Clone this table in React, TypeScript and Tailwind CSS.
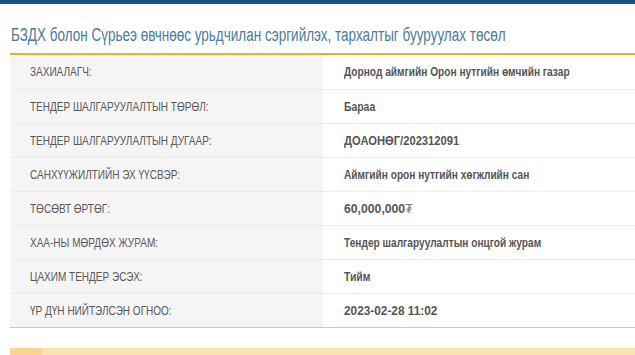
import React from "react";

const rows: [string, React.ReactNode, string][] = [
  ["ЗАХИАЛАГЧ:", "Дорнод аймгийн Орон нутгийн өмчийн газар", "scale-x-[0.78]"],
  ["ТЕНДЕР ШАЛГАРУУЛАЛТЫН ТӨРӨЛ:", "Бараа", "scale-x-[0.8]"],
  ["ТЕНДЕР ШАЛГАРУУЛАЛТЫН ДУГААР:", "ДОАОНӨГ/202312091", "scale-x-[0.86]"],
  ["САНХҮҮЖИЛТИЙН ЭХ ҮҮСВЭР:", "Аймгийн орон нутгийн хөгжлийн сан", "scale-x-[0.78]"],
  [
    "ТӨСӨВТ ӨРТӨГ:",
    <>
      60,000,000<span className="font-normal text-[#777777]">₮</span>
    </>,
    "scale-x-[0.94]",
  ],
  ["ХАА-НЫ МӨРДӨХ ЖУРАМ:", "Тендер шалгаруулалтын онцгой журам", "scale-x-[0.78]"],
  ["ЦАХИМ ТЕНДЕР ЭСЭХ:", "Тийм", "scale-x-[0.8]"],
  ["ҮР ДҮН НИЙТЭЛСЭН ОГНОО:", "2023-02-28 11:02", "scale-x-[0.91]"],
];

export default function App() {
  return (
    <div
      className="w-[635px] h-[355px] overflow-hidden bg-white"
      style={{ fontFamily: '"Liberation Sans", Arial, sans-serif' }}
    >
      <div className="h-[4px] bg-[#17527d]" />
      <div className="pl-[10px]">
        <h1 className="h-[49px] pt-[19px] pl-[1px] text-[18px] leading-[24px] text-[#4c7b98] whitespace-nowrap">
          <span className="inline-block origin-left scale-x-[0.75]">
            БЗДХ болон Сүрьеэ өвчнөөс урьдчилан сэргийлэх, тархалтыг бууруулах төсөл
          </span>
        </h1>
        <div className="border-t-[2px] border-b border-t-[#e8b02e] border-b-[#ecc66a]">
          {rows.map(([k, v, s], i) => (
            <div
              key={i}
              className={`flex h-[34px] ${i > 0 ? "border-t border-[#ececec]" : ""}`}
            >
              <div className="w-[313px] shrink-0 bg-[#f5f5f5] pl-[20px] flex items-center text-[13px] text-[#595959] whitespace-nowrap">
                <span className="inline-block origin-left scale-x-[0.77]">{k}</span>
              </div>
              <div className="flex-1 pl-[21px] flex items-center text-[13px] font-bold text-[#555555] whitespace-nowrap">
                <span className={`inline-block origin-left ${s}`}>{v}</span>
              </div>
            </div>
          ))}
        </div>
        <div className="mt-[20px] h-[10px] bg-[#fde3b2] flex">
          <div className="w-[32px] bg-[#fcd391]" />
        </div>
      </div>
    </div>
  );
}
